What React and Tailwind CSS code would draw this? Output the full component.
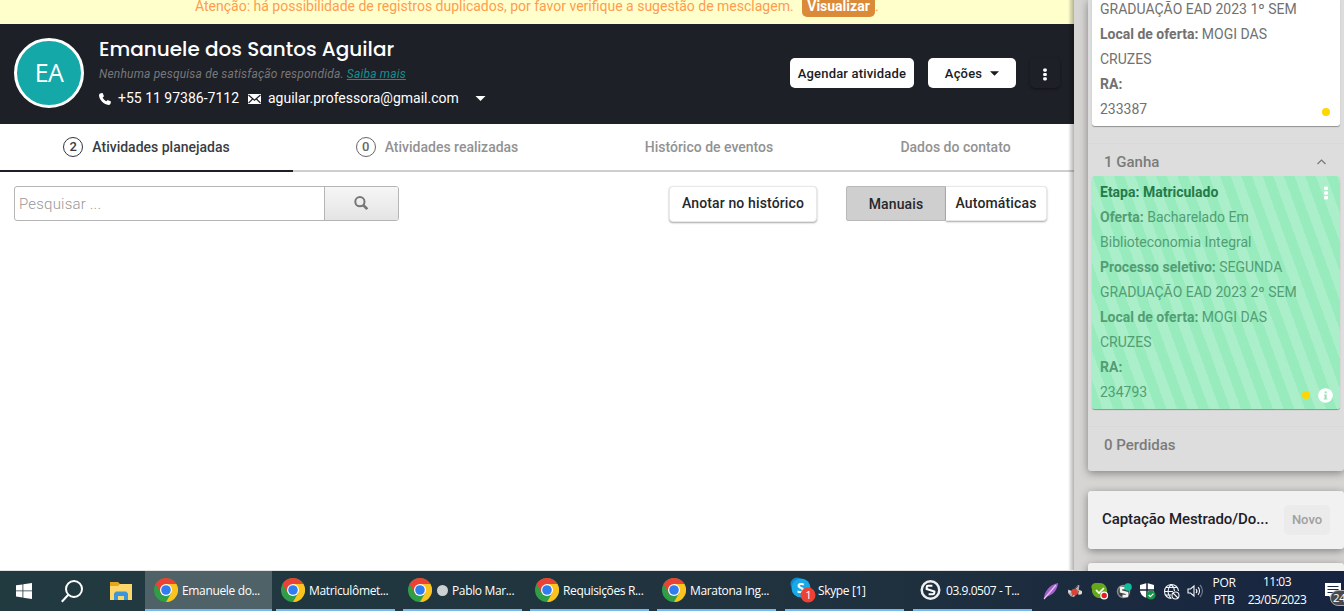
import React from "react";

const ROBOTO = "font-['Roboto','Liberation_Sans',sans-serif]";

function Dots({ className }) {
  return (
    <svg className={className} viewBox="0 0 6 14" fill="currentColor">
      <rect x="1" y="0.6" width="4" height="3.4" rx="1.2" />
      <rect x="1" y="5.3" width="4" height="3.4" rx="1.2" />
      <rect x="1" y="10" width="4" height="3.4" rx="1.2" />
    </svg>
  );
}

function Caret({ className }) {
  return (
    <svg className={className} viewBox="0 0 10 5" fill="currentColor">
      <path d="M0 0h10L5 5z" />
    </svg>
  );
}

function Warning() {
  return (
    <div className="flex h-6 shrink-0 items-start bg-[#ffffcc] pl-[195px] text-[14px] leading-4 text-[#ff9c50]">
      <span className="-mt-[2px] w-[598px] whitespace-nowrap">
        Atenção: há possibilidade de registros duplicados, por favor verifique a sugestão de mesclagem.
      </span>
      <span className="-mt-2 ml-[9px] h-[25px] w-[73px] rounded-[5px] bg-[#db8a38] pt-[6px] text-center font-bold text-white">
        Visualizar
      </span>
      <span className="-mt-[2px]">.</span>
    </div>
  );
}

function Header() {
  return (
    <header className="flex h-[100px] shrink-0 items-start bg-[#1e2027] text-white">
      <div className="mt-[14px] ml-[14px] flex h-[70px] w-[70px] shrink-0 items-center justify-center rounded-full border-[3px] border-white bg-[#14a8a8] font-['Open_Sans','Noto_Sans',sans-serif] text-[25px] tracking-[-0.6px]">
        EA
      </div>
      <div className="ml-[15px] flex w-[691px] shrink-0 flex-col whitespace-nowrap">
        <h1 className="mt-[11px] h-7 font-['Poppins','Inter',sans-serif] text-[20px] leading-7 font-medium">
          Emanuele dos Santos Aguilar
        </h1>
        <p className="mt-[3px] h-4 text-[12px] leading-4 tracking-[0.18px] text-[#777779] italic">
          Nenhuma pesquisa de satisfação respondida. <a className="text-[#14918f] underline">Saiba mais</a>
        </p>
        <div className="mt-[7px] flex h-[18px] items-center text-[14px] leading-[18px]">
          <svg className="mt-[2px] h-3 w-3" viewBox="0 0 12 12" fill="currentColor">
            <path d="M1.8.3 3.6 0 5 3.2 3.7 4.6c.8 1.700 1.900 2.900 3.600 3.700L8.700 7 12 8.600l-.4 2c-.3.900-1 1.400-2 1.300C5 11.500.3 7 0 2.500 0 1.400.7.600 1.800.3Z" />
          </svg>
          <span className="ml-[7px] w-[121px]">+55 11 97386-7112</span>
          <svg className="mt-[2px] ml-[9px] h-[10px] w-[13px]" viewBox="0 0 13 10">
            <rect width="13" height="10" fill="#fff" />
            <path d="M.5 1 6.500 6.300 12.500 1M.5 9.200 4.500 5M12.500 9.200 8.500 5" fill="none" stroke="#1e2027" strokeWidth="1.200" />
          </svg>
          <span className="ml-[7px] w-[190px]">aguilar.professora@gmail.com</span>
          <Caret className="ml-[17px] h-[5px] w-[11px]" />
        </div>
      </div>
      <div className="mt-[34px] flex items-center text-[13px] font-medium text-[#1a1b22]">
        <div className="flex h-[30px] w-[124px] items-center justify-center rounded-[5px] bg-white pt-px tracking-[0.18px] whitespace-nowrap">
          Agendar atividade
        </div>
        <div className="ml-[14px] flex h-[30px] w-[88px] items-center justify-center rounded-[5px] bg-white pt-px tracking-[0.18px]">
          Ações <Caret className="ml-2 h-[5px] w-[9px]" />
        </div>
        <div className="ml-[14px] flex h-[30px] w-[30px] items-center justify-center rounded-[5px] text-white shadow-[0_1px_3px_rgba(0,0,0,0.45)]">
          <Dots className="mt-[2px] h-[13px] w-[6px]" />
        </div>
      </div>
    </header>
  );
}

function Tabs() {
  return (
    <nav className="flex h-12 shrink-0 text-[14px] font-medium whitespace-nowrap text-[#929292]">
      <div className="flex w-[293px] items-center justify-center border-b-2 border-[#1e2027] text-[#3a3c42]">
        <span className="mr-[9px] flex h-5 w-5 items-center justify-center rounded-full border border-[#33353b] text-[13px]">2</span>
        Atividades planejadas
      </div>
      <div className="flex w-[288px] items-center justify-center border-b-2 border-[#cecece]">
        <span className="mr-[9px] flex h-5 w-5 items-center justify-center rounded-full border border-[#666] text-[13px] text-[#666]">0</span>
        Atividades realizadas
      </div>
      <div className="flex w-[256px] items-center justify-center border-b-2 border-[#cecece]">Histórico de eventos</div>
      <div className="flex w-[237px] items-center justify-center border-b-2 border-[#cecece]">Dados do contato</div>
    </nav>
  );
}

function Toolbar() {
  return (
    <div className="flex items-start pt-[14px] pl-[14px] text-[14px] font-medium whitespace-nowrap text-[#26272d]">
      <div className="flex h-[35px] w-[385px] overflow-hidden rounded-[3px] border border-[#b5b5b5]">
        <div className="flex flex-1 items-center pt-[2px] pl-1 text-[15px] font-light tracking-[0.2px] text-[#999]">Pesquisar ...</div>
        <div className="flex w-[74px] items-center justify-center border-l border-[#b5b5b5] bg-linear-to-b from-[#f6f6f6] to-[#e4e4e4] text-[#777]">
          <svg className="mr-px mb-[2px] h-[14px] w-[14px]" viewBox="0 0 14 14" fill="none" stroke="currentColor">
            <circle cx="5.900" cy="5.700" r="4.600" strokeWidth="2" />
            <path d="m9.200 9 4 4" strokeWidth="2.600" />
          </svg>
        </div>
      </div>
      <div className="ml-[270px] flex h-9 w-[148px] items-center justify-center rounded-[4px] border border-[#e8e8e8] bg-white pb-px tracking-[0.14px] shadow-[0_1px_2px_rgba(0,0,0,0.35)]">
        Anotar no histórico
      </div>
      <div className="ml-[29px] flex">
        <div className="flex h-[35px] w-[100px] items-center justify-center rounded-l-[2px] border border-[#b9b9b9] bg-[#cfcfcf] pt-[2px] tracking-[0.14px]">Manuais</div>
        <div className="flex h-[35px] w-[101px] items-center justify-center rounded-r-[4px] border border-l-0 border-[#e8e8e8] bg-white tracking-[0.14px] shadow-[0_1px_2px_rgba(0,0,0,0.35)]">
          Automáticas
        </div>
      </div>
    </div>
  );
}

function Side() {
  return (
    <aside className="flex w-[270px] shrink-0 flex-col overflow-hidden bg-[#d6d5d3] pl-[14px] text-[14px] leading-[25px] whitespace-nowrap">
      <section className="flex h-[471px] shrink-0 flex-col rounded-b-[3px] bg-[#dddddd] px-1 shadow-[0_2px_8px_rgba(0,0,0,0.4)]">
        <div className="relative h-[126px] shrink-0 overflow-hidden rounded-b-[3px] bg-white pl-2 text-[#717171] shadow-[0_1px_1px_rgba(0,0,0,0.35)]">
          <div className="-mt-[3px]">GRADUAÇÃO EAD 2023 1º SEM</div>
          <div><b>Local de oferta:</b> MOGI DAS</div>
          <div>CRUZES</div>
          <div><b>RA:</b></div>
          <div>233387</div>
          <span className="absolute top-[108px] right-[10px] h-2 w-2 rounded-full bg-[#ffd700]" />
        </div>
        <div className="-mx-1 mt-[17px] flex h-[33px] shrink-0 items-center justify-between border-t border-[#d8d8d8] pt-[4px] pr-[18px] pl-4 text-[15px] font-medium text-[#7b7b7b]">
          1 Ganha
          <svg className="h-[6px] w-[9px]" viewBox="0 0 9 6" fill="none" stroke="#777" strokeWidth="1.200">
            <path d="M.5 5 4.500 1l4 4" />
          </svg>
        </div>
        <div className="relative h-[233px] shrink-0 rounded-[3px] bg-[repeating-linear-gradient(70deg,#97ebbc,#97ebbc_10px,#abefca_10px,#abefca_20px)] pt-[4px] pl-2 text-[#529e74] shadow-[0_1px_1px_rgba(0,0,0,0.35)]">
          <div className="font-bold text-[#257a4a]">Etapa: Matriculado</div>
          <div><b>Oferta:</b> Bacharelado Em</div>
          <div>Biblioteconomia Integral</div>
          <div><b>Processo seletivo:</b> SEGUNDA</div>
          <div>GRADUAÇÃO EAD 2023 2º SEM</div>
          <div><b>Local de oferta:</b> MOGI DAS</div>
          <div>CRUZES</div>
          <div><b>RA:</b></div>
          <div>234793</div>
          <Dots className="absolute top-[10px] right-[11px] h-[14px] w-[6px] text-white" />
          <span className="absolute top-[215px] right-[30px] h-2 w-2 rounded-full bg-[#ffd700]" />
          <svg className="absolute top-[212px] right-[7px] h-[15px] w-[15px]" viewBox="0 0 15 15">
            <circle cx="7.500" cy="7.500" r="7.300" fill="#fff" />
            <path d="M6.700 3.500h2v1.700h-2zM6 6.500h2.600v4h.8v1H5.700v-1h.9v-3H6z" fill="#97dfb6" />
          </svg>
        </div>
        <div className="-mx-1 mt-[17px] flex flex-1 items-start border-t border-[#d8d8d8] pt-[6px] pl-4 text-[15px] font-medium text-[#7b7b7b]">
          0 Perdidas
        </div>
      </section>
      <section className="mt-5 flex h-[58px] shrink-0 items-center rounded-[3px] bg-[#f1f1f1] pl-[14px] shadow-[0_2px_8px_rgba(0,0,0,0.4)]">
        <span className="-mt-[2px] w-[182px] text-[15px] font-medium tracking-[-0.07px] text-[#1e2027]">Captação Mestrado/Do...</span>
        <span className="flex h-[30px] w-[46px] items-center justify-center rounded-[5px] bg-[#ebebeb] pb-px text-[13px] font-medium text-[#a0a0a0]">Novo</span>
      </section>
      <section className="mt-[14px] h-5 shrink-0 rounded-t-[3px] bg-[#f1f1f1] shadow-[0_2px_8px_rgba(0,0,0,0.4)]" />
    </aside>
  );
}

function Chrome() {
  return (
    <svg className="h-6 w-6 shrink-0" viewBox="0 0 24 24">
      <circle cx="12" cy="12" r="12" fill="#2f9e47" />
      <path d="M1.600 6A12 12 0 0 1 22.400 6H12L6.800 15Z" fill="#ea4335" />
      <path d="M22.400 6A12 12 0 0 1 12 24l5.200-9L12 6Z" fill="#fcc31e" />
      <circle cx="12" cy="12" r="6" fill="#fff" />
      <circle cx="12" cy="12" r="4.800" fill="#2f7def" />
    </svg>
  );
}

function Task({ icon, label, className }) {
  return (
    <div className={"flex h-10 shrink-0 items-center overflow-hidden border-b-2 border-[#76b9ed] whitespace-nowrap " + className}>
      {icon}
      <span className="pt-[2px]">{label}</span>
    </div>
  );
}

function Skype() {
  return (
    <svg className="h-[26px] w-[26px] shrink-0" viewBox="0 0 26 26">
      <circle cx="7" cy="7" r="6.500" fill="#1487c8" />
      <circle cx="14.500" cy="15" r="6.300" fill="#0d7fc4" />
      <circle cx="11" cy="11" r="9.500" fill="#17a9e8" />
      <text x="6.800" y="16" fontSize="14" fontWeight="700" fill="#fff" fontFamily="Open Sans, sans-serif">S</text>
      <circle cx="18" cy="18" r="7.500" fill="#ed4134" />
      <text x="15.200" y="22.300" fontSize="11.500" fill="#fff" fontFamily="Open Sans, sans-serif">1</text>
    </svg>
  );
}

function TeamIcon() {
  return (
    <svg className="h-[22px] w-[21px] shrink-0" viewBox="0 0 22 22" fill="none">
      <circle cx="11" cy="11" r="9.200" stroke="#eee" strokeWidth="2.600" />
      <path d="M13 6.500H8.500Q7 6.500 7 8v2l8 2.500V14q0 1.500-1.500 1.500H9" stroke="#fff" strokeWidth="2.200" />
    </svg>
  );
}

function Tray() {
  return (
    <div className="flex h-10 items-center">
      <svg className="ml-[11px] h-5 w-4 shrink-0" viewBox="0 0 16 20">
        <path d="M1 18C1 11 6 4 15 2c-.5 6-4 12-12 14Z" fill="#a460cb" />
        <path d="M1 18 13 4" stroke="#e3c5f0" strokeWidth="1.200" />
      </svg>
      <svg className="ml-[8px] h-4 w-[16px] shrink-0" viewBox="0 0 16 16">
        <path d="M1 6.500 4 8l3-1.500L11 2l1.500.5-.8 4L15 8v3l-3 1-2-1.500-3 3.500-3-.5L1 10Z" fill="#b9aeae" />
        <circle cx="7.500" cy="9" r="3.200" fill="#dd4234" />
        <circle cx="13.300" cy="9.500" r="1.700" fill="#e0dcdc" />
        <circle cx="2.600" cy="8.500" r="1.300" fill="#e0dcdc" />
        <path d="m8 6 3-3M4.500 13.500l1.500-2M10.500 11l1-3" stroke="#5e5557" />
      </svg>
      <svg className="ml-[8px] h-[18px] w-[18px] shrink-0" viewBox="0 0 18 18">
        <path d="M5 1a4 4 0 0 0-4 6c-.5 5 3 9 8 9 4 2 8-1 7-5C17 5 13 .5 8 1Z" fill="#65a91b" />
        <path d="m5 8 3 3 5-5" fill="none" stroke="#fff" strokeWidth="1.700" />
        <circle cx="13.200" cy="13.500" r="3.300" fill="#e31e24" stroke="#fff" strokeWidth="1.200" />
      </svg>
      <svg className="ml-[7px] h-4 w-4 shrink-0" viewBox="0 0 16 16">
        <circle cx="7.500" cy="8.500" r="6.700" fill="#8b8c88" />
        <circle cx="7.500" cy="8.500" r="5.300" fill="#3c4042" />
        <path d="M9.500 5H5v3.500l6 1.500v3H6.500" fill="none" stroke="#f2f2ee" strokeWidth="2.400" />
        <circle cx="12" cy="4" r="3.800" fill="#11bd9a" />
      </svg>
      <svg className="ml-[7px] h-[18px] w-[17px] shrink-0" viewBox="0 0 17 18">
        <path d="M8 1 15 3v5c0 4-3 7-7 8-4-1-7-4-7-8V3Z" fill="#fff" />
        <path d="M8 1v15M1 8h14" stroke="#182538" strokeWidth="1.500" />
        <circle cx="12" cy="13" r="4.600" fill="#159447" />
        <path d="m9.700 13 1.700 1.700 3-3" fill="none" stroke="#fff" strokeWidth="1.200" />
      </svg>
      <svg className="ml-[7px] h-[17px] w-[17px] shrink-0" viewBox="0 0 17 17" fill="none" stroke="#f3f4f5" strokeWidth="1.100">
        <path d="M8.500 15.500A7 7 0 1 1 15.500 8M1.500 8.500H10M2.500 4.500h12M2.500 12H8M8 1.500c-4 4-4 10 0 14M8 1.500c2.500 2 3.300 4 3.500 6.500" />
        <circle cx="12.500" cy="12.500" r="3.500" />
        <path d="m10 10 5 5" />
      </svg>
      <svg className="ml-[7px] h-[14px] w-[17px] shrink-0" viewBox="0 0 17 14" fill="none" stroke="#f3f4f5" strokeWidth="1.100">
        <path d="M1 5h2.500L7 2v10L3.500 9H1zM9 5c1 1.200 1 3 0 4M11 3.200c2 2 2 5.500 0 7.600" />
        <path d="M13 1c3.300 3.300 3.300 8.700 0 12" stroke="#748090" />
      </svg>
      <div className="ml-[7px] w-[26px] shrink-0 text-center text-[12px] leading-[17px] tracking-[-0.3px]">
        POR<br />PTB
      </div>
      <div className="ml-[5px] w-[70px] shrink-0 text-center text-[12px] leading-[18px] tracking-[-0.5px] whitespace-nowrap">
        11:03<br />23/05/2023
      </div>
      <svg className="ml-[11px] h-8 w-[22px] shrink-0" viewBox="0 0 22 32">
        <path d="M2 8h16v13H9v3l-3-3H2z" fill="#fff" />
        <path d="M4.500 11.500h11M4.500 14.500h11M4.500 17.500h7" stroke="#1a2940" strokeWidth="1.200" />
        <rect x="7.500" y="15.500" width="22" height="15" rx="7.500" fill="#48494d" stroke="#aaa" />
        <text x="10" y="27" fontSize="11.500" fill="#fff" fontFamily="Open Sans, sans-serif">24</text>
      </svg>
    </div>
  );
}

function Taskbar() {
  return (
    <footer className="flex h-10 w-[1344px] shrink-0 items-center overflow-hidden bg-linear-to-r from-[#213a40] via-[#20323e] via-60% to-[#17243f] font-['Open_Sans','Noto_Sans',sans-serif] text-[12px] tracking-[-0.35px] text-white">
      <svg className="ml-4 h-4 w-4 shrink-0" viewBox="0 0 16 16" fill="#fff">
        <path d="M0 2.300 6.500 1.400v6.100H0zM7.300 1.300 16 0v7.500H7.300zM0 8.300h6.500v6.200L0 13.600zM7.300 8.300H16V16l-8.700-1.300z" />
      </svg>
      <svg className="ml-[29px] h-[23px] w-[23px] shrink-0" viewBox="0 0 23 23" fill="none" stroke="#fff" strokeWidth="2">
        <circle cx="13" cy="9" r="8" />
        <path d="m7.300 14.700-6.500 7" />
      </svg>
      <svg className="ml-[26px] h-[19px] w-[22px] shrink-0" viewBox="0 0 22 19">
        <path d="M0 0h8l2 2h12v16H0z" fill="#e8a51c" />
        <path d="M0 4h8l2-2h12v16H0z" fill="#fcd76b" />
        <path d="M4 18v-6.500L6 9.500h10l2 2V18h-4v-4H8v4z" fill="#3b97da" />
      </svg>
      <Task className="ml-[13px] w-[127px] gap-1 bg-[#4e6267] pl-[9px]" icon={<Chrome />} label="Emanuele do..." />
      <Task className="ml-1 w-[119px] gap-1 pl-[5px]" icon={<Chrome />} label="Matriculômet..." />
      <Task
        className="ml-2 w-[119px] gap-1 pl-[5px]"
        icon={<><Chrome /><span className="ml-[1px] h-[11px] w-[11px] shrink-0 rounded-full bg-[#cdd1d2]" /></>}
        label="Pablo Mar..."
      />
      <Task className="ml-2 w-[119px] gap-1 pl-[5px]" icon={<Chrome />} label="Requisições R..." />
      <Task className="ml-2 w-[119px] gap-1 pl-[5px]" icon={<Chrome />} label="Maratona Ing..." />
      <Task className="ml-[9px] w-[119px] gap-[2px] pl-[5px]" icon={<Skype />} label="Skype [1]" />
      <Task className="ml-[9px] w-[119px] gap-[5px] pl-[7px]" icon={<TeamIcon />} label={<span className="tracking-[-0.45px]">03.9.0507 - T...</span>} />
      <Tray />
    </footer>
  );
}

export default function App() {
  return (
    <div className={"flex h-[611px] w-[1344px] flex-col overflow-hidden bg-white " + ROBOTO}>
      <div className="flex h-[571px] shrink-0 overflow-hidden">
        <main className="relative flex w-[1074px] shrink-0 flex-col overflow-hidden border-b border-[#e3e3e3] bg-white">
          <Warning />
          <Header />
          <Tabs />
          <Toolbar />
          <div className="absolute inset-y-0 right-0 w-[6px] bg-linear-to-r from-transparent to-black/30" />
        </main>
        <Side />
      </div>
      <Taskbar />
    </div>
  );
}
